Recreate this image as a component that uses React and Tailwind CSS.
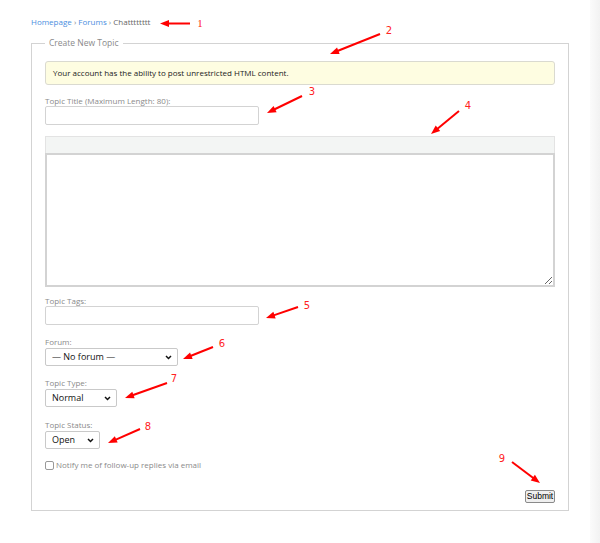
import React from "react";

const arrows = [
  { x1: 190, y1: 23.5, x2: 160, y2: 23.5, n: "1", lx: 200, ly: 27, serif: true },
  { x1: 380, y1: 34, x2: 330, y2: 54, n: "2", lx: 389, ly: 34 },
  { x1: 302, y1: 96, x2: 267, y2: 113, n: "3", lx: 312, ly: 95 },
  { x1: 459, y1: 111, x2: 431, y2: 134, n: "4", lx: 468, ly: 109 },
  { x1: 298, y1: 307, x2: 266, y2: 318, n: "5", lx: 307, ly: 309 },
  { x1: 213, y1: 347, x2: 183, y2: 359, n: "6", lx: 222, ly: 347 },
  { x1: 167, y1: 383, x2: 125, y2: 398, n: "7", lx: 174, ly: 382 },
  { x1: 140, y1: 429, x2: 108, y2: 443, n: "8", lx: 148, ly: 430 },
  { x1: 512, y1: 462, x2: 540, y2: 483, n: "9", lx: 502, ly: 462 },
];

function Arrow({ a }) {
  const dx = a.x2 - a.x1;
  const dy = a.y2 - a.y1;
  const len = Math.hypot(dx, dy);
  const ux = dx / len;
  const uy = dy / len;
  const hl = 9;
  const hw = 3.5;
  const bx = a.x2 - ux * hl;
  const by = a.y2 - uy * hl;
  const pts = `${a.x2},${a.y2} ${bx - uy * hw},${by + ux * hw} ${bx + uy * hw},${by - ux * hw}`;
  return (
    <g>
      <line x1={a.x1} y1={a.y1} x2={bx + ux} y2={by + uy} stroke="#f00" strokeWidth="2" />
      <polygon points={pts} fill="#f00" />
      <text
        x={a.lx}
        y={a.ly}
        textAnchor="middle"
        fill="#f22"
        fontSize={a.serif ? 11 : 10}
        fontFamily={a.serif ? "Liberation Serif, serif" : "DejaVu Sans, sans-serif"}
      >
        {a.n}
      </text>
    </g>
  );
}

function Chevron() {
  return (
    <svg width="7" height="5" viewBox="0 0 7 5" className="pointer-events-none absolute right-[6px] top-[7px]">
      <path d="M1 1 L3.5 3.5 L6 1" stroke="#111" strokeWidth="1.5" fill="none" />
    </svg>
  );
}

function Select({ w, value }) {
  return (
    <div className={`relative mt-[1px] h-[18px] ${w}`}>
      <select className="block h-[18px] w-full appearance-none rounded-[2px] border border-[#c9c9c9] bg-white py-0 pl-[6px] text-[9px] leading-[16px] text-[#111]">
        <option>{value}</option>
      </select>
      <Chevron />
    </div>
  );
}

function Label({ children, mt }) {
  return <div className={`${mt} h-[11px] text-[8px] leading-[11px] text-[#8a8a8a]`}>{children}</div>;
}

export default function App() {
  return (
    <div
      className="relative flex h-[543px] w-[600px] overflow-hidden bg-white"
      style={{ fontFamily: "'Open Sans', 'Noto Sans', sans-serif" }}
    >
      <div className="flex-1 pl-[31px] pt-[16px]">
        <div className="h-[12px] text-[8px] leading-[12px] text-[#8a8a8a]">
          <span className="text-[#4a8ee0]">Homepage</span>
          <span> › </span>
          <span className="text-[#4a8ee0]">Forums</span>
          <span> › </span>
          <span className="text-[#666]">Chatttttttt</span>
        </div>
        <fieldset className="mt-[9px] w-[538px] border border-[#d3d3d3] px-[13px] pb-[7px] pt-[12px]">
          <legend className="px-[4px] text-[8.5px] leading-[12px] text-[#8a8a8a]">Create New Topic</legend>
          <div className="flex h-[24px] items-center rounded-[3px] border border-[#dadad0] bg-[#fefde1] pl-[7px] text-[8px] text-[#222]">
            Your account has the ability to post unrestricted HTML content.
          </div>
          <Label mt="mt-[10px]">Topic Title (Maximum Length: 80):</Label>
          <div className="h-[19px] w-[214px] rounded-[2px] border border-[#d3d3d3]" />
          <div className="mt-[11px] h-[17px] w-full border border-b-0 border-[#e3e3e3] bg-[#f3f5f4]" />
          <textarea className="block h-[134px] w-full resize-y border-2 border-[#d3d3d3] bg-white" />
          <Label mt="mt-[8px]">Topic Tags:</Label>
          <div className="h-[19px] w-[214px] rounded-[2px] border border-[#d3d3d3]" />
          <Label mt="mt-[11px]">Forum:</Label>
          <Select w="w-[133px]" value="— No forum —" />
          <Label mt="mt-[11px]">Topic Type:</Label>
          <Select w="w-[72px]" value="Normal" />
          <Label mt="mt-[12px]">Topic Status:</Label>
          <Select w="w-[55px]" value="Open" />
          <div className="mt-[11px] flex h-[10px] items-center gap-[2px]">
            <span className="h-[9px] w-[9px] rounded-[2px] border border-[#999] bg-white" />
            <span className="text-[8px] leading-[10px] text-[#8a8a8a]">Notify me of follow-up replies via email</span>
          </div>
          <div className="mt-[20px] flex justify-end">
            <button
              className="h-[13px] w-[30px] rounded-[2px] border border-[#8a8a8a] bg-[#efefef] text-[8.5px] leading-[11px] text-black"
              style={{ fontFamily: "'Liberation Sans', Arial, sans-serif" }}
            >
              Submit
            </button>
          </div>
        </fieldset>
      </div>
      <div className="h-[543px] w-[10px] bg-gradient-to-r from-[#fbfbfb] to-[#f2f2f2]" />
      <svg className="pointer-events-none absolute left-0 top-0" width="600" height="543">
        {arrows.map((a) => (
          <Arrow key={a.n} a={a} />
        ))}
      </svg>
    </div>
  );
}
